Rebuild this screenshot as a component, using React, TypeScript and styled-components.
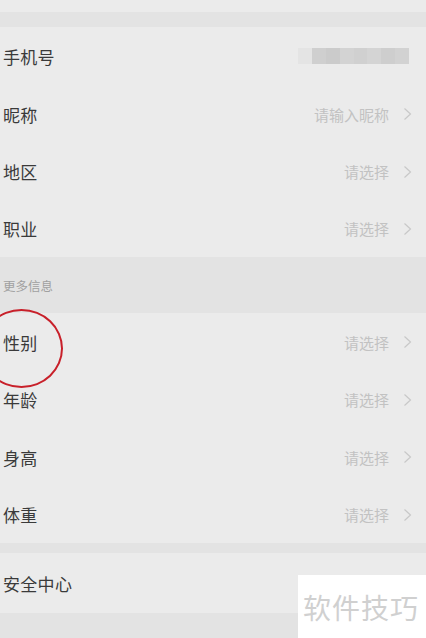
import React from "react";
import styled, { createGlobalStyle } from "styled-components";

const Global = createGlobalStyle`
  html, body { margin: 0; padding: 0; background: #ebebeb; }
  body { font-family: "Noto Sans CJK SC", "Noto Sans", sans-serif; }
`;

const Page = styled.div`
  width: 426px;
  height: 638px;
  position: relative;
  overflow: hidden;
  background: #ebebeb;
  display: flex;
  flex-direction: column;
`;

const Band = styled.div<{ $h: number }>`
  height: ${(p) => p.$h}px;
  background: #e3e3e3;
  flex: none;
`;

const Top = styled.div`
  height: 12px;
  background: #ebebeb;
  flex: none;
`;

const Row = styled.div<{ $h: number }>`
  height: ${(p) => p.$h}px;
  flex: none;
  display: flex;
  align-items: center;
  justify-content: space-between;
  padding: 0 14px 0 3px;
  background: #ebebeb;
  position: relative;
`;

const Label = styled.span`
  font-size: 17px;
  color: #3a3a3a;
  letter-spacing: 0.3px;
`;

const Right = styled.span`
  display: flex;
  align-items: center;
  gap: 14px;
  font-size: 15px;
  color: #c2c2c2;
`;

const Chevron = styled.svg`
  width: 9px;
  height: 14px;
`;

const Header = styled.div`
  height: 56px;
  flex: none;
  background: #e3e3e3;
  display: flex;
  align-items: center;
  padding-left: 3px;
  font-size: 12.5px;
  color: #a0a0a0;
`;

const Blur = styled.div`
  display: flex;
  height: 16px;
  width: 111px;
  margin-right: 3px;
`;

const BlurCell = styled.div<{ $c: string }>`
  flex: 1;
  background: ${(p) => p.$c};
`;

const Circle = styled.div`
  position: absolute;
  left: -20px;
  top: -4px;
  width: 83px;
  height: 79px;
  border: 2.5px solid #c8202a;
  border-radius: 50%;
  box-sizing: border-box;
  z-index: 2;
`;

const Watermark = styled.div`
  position: absolute;
  right: 0;
  bottom: 0;
  width: 128px;
  height: 63px;
  background: #ffffff;
  display: flex;
  align-items: center;
  padding-left: 5px;
  box-sizing: border-box;
  font-size: 28px;
  color: #d0d0d0;
  letter-spacing: 1px;
  z-index: 3;
`;

const Arrow = () => (
  <Chevron viewBox="0 0 9 14">
    <path d="M1.5 1.5 L7.5 7 L1.5 12.5" fill="none" stroke="#c8c8c8" strokeWidth="1.2" />
  </Chevron>
);

const blurColors = ["#e4e4e4", "#cfcfcf", "#cbcbcb", "#d3d3d3", "#d0d0d0", "#d4d4d4", "#cecece", "#d2d2d2"];

export default function App() {
  return (
    <Page>
      <Global />
      <Top />
      <Band $h={15} />
      <Row $h={58}>
        <Label>手机号</Label>
        <Blur>
          {blurColors.map((c, i) => (
            <BlurCell key={i} $c={c} />
          ))}
        </Blur>
      </Row>
      <Row $h={58}>
        <Label>昵称</Label>
        <Right>请输入昵称<Arrow /></Right>
      </Row>
      <Row $h={57}>
        <Label>地区</Label>
        <Right>请选择<Arrow /></Right>
      </Row>
      <Row $h={57}>
        <Label>职业</Label>
        <Right>请选择<Arrow /></Right>
      </Row>
      <Header>更多信息</Header>
      <Row $h={58}>
        <Circle />
        <Label>性别</Label>
        <Right>请选择<Arrow /></Right>
      </Row>
      <Row $h={57}>
        <Label>年龄</Label>
        <Right>请选择<Arrow /></Right>
      </Row>
      <Row $h={58}>
        <Label>身高</Label>
        <Right>请选择<Arrow /></Right>
      </Row>
      <Row $h={57}>
        <Label>体重</Label>
        <Right>请选择<Arrow /></Right>
      </Row>
      <Band $h={10} />
      <Row $h={60}>
        <Label>安全中心</Label>
      </Row>
      <Band $h={26} />
      <Watermark>软件技巧</Watermark>
    </Page>
  );
}
